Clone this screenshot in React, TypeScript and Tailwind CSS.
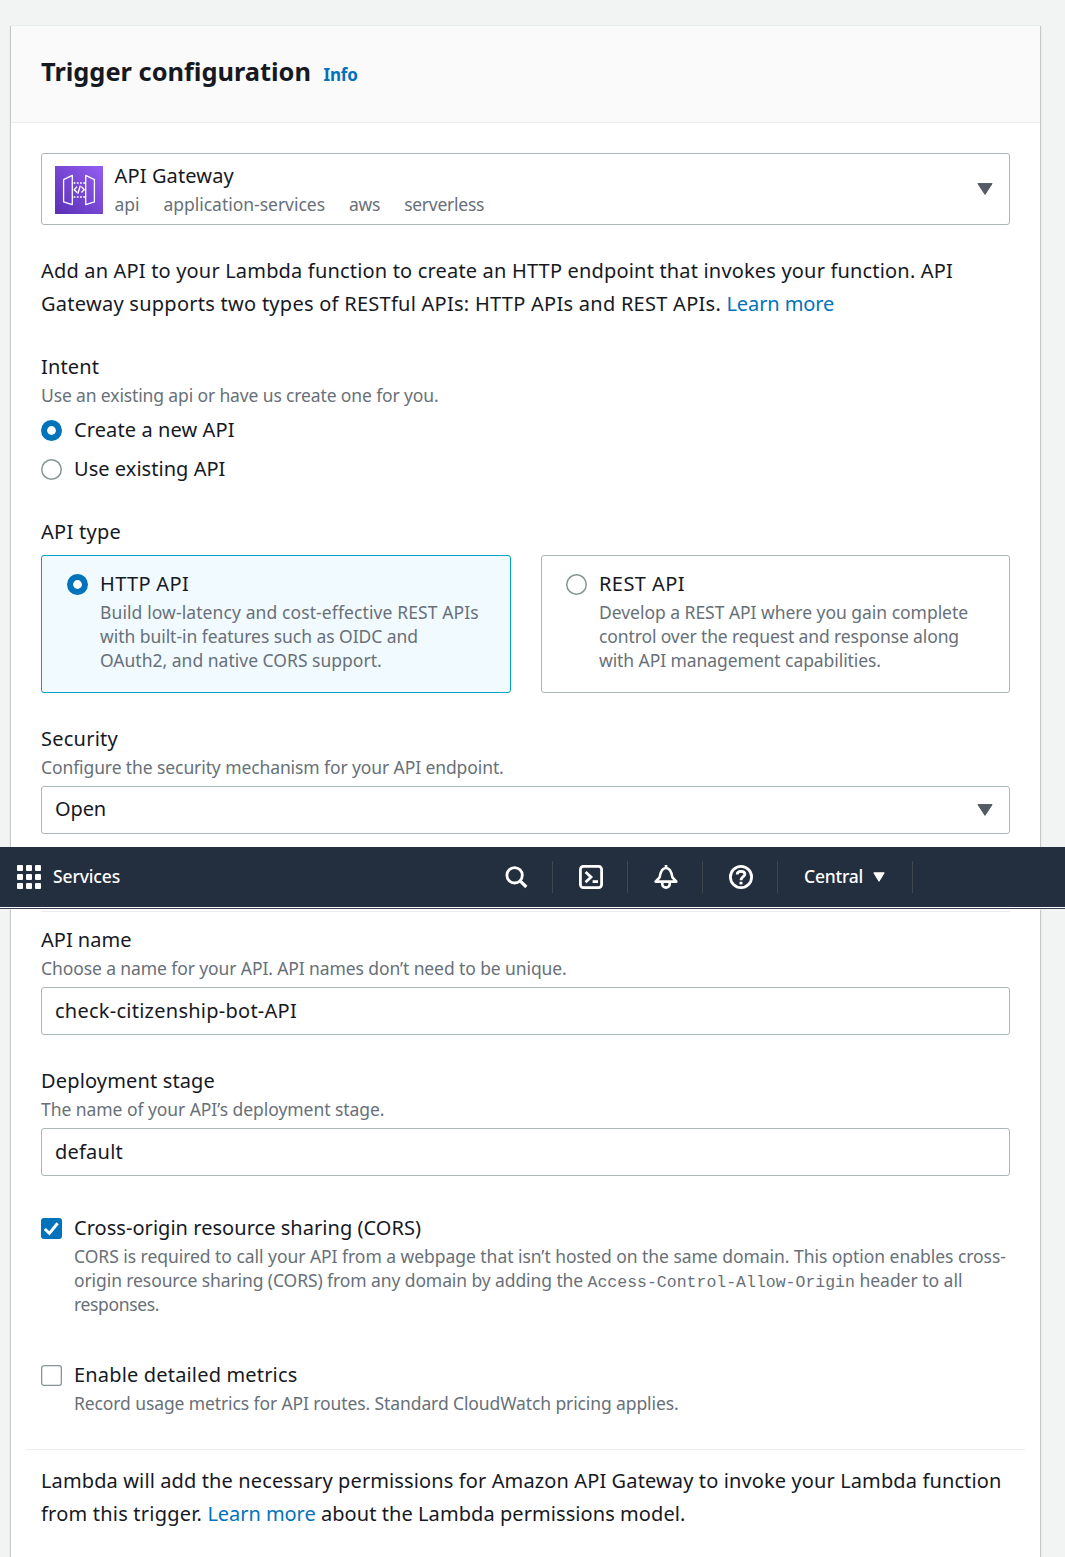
import React from "react";

const label = "text-[20px] leading-[33px] text-[#16191f] whitespace-nowrap";
const hint = "text-[17.5px] leading-[24px] text-[#687078] whitespace-nowrap";
const field =
  "flex items-center border border-[#aab7b8] rounded-[3px] bg-white px-[13px] h-[48px] mt-[7px]";

function Radio({ checked = false }: { checked?: boolean }) {
  return (
    <svg width="21" height="21" viewBox="0 0 21 21" className="shrink-0">
      {checked ? (
        <>
          <circle cx="10.5" cy="10.5" r="10.5" fill="#0073bb" />
          <circle cx="10.5" cy="10.5" r="4.4" fill="#fff" />
        </>
      ) : (
        <circle cx="10.5" cy="10.5" r="9.75" fill="#fff" stroke="#879596" strokeWidth="1.5" />
      )}
    </svg>
  );
}

function Checkbox({ checked = false }: { checked?: boolean }) {
  return (
    <svg width="21" height="21" viewBox="0 0 21 21" className="shrink-0" fill="none">
      {checked ? (
        <>
          <rect width="21" height="21" rx="3" fill="#0073bb" />
          <path d="M3.8 11 8.4 15.4 16.6 5.2" stroke="#fff" strokeWidth="3" />
        </>
      ) : (
        <rect x="0.65" y="0.65" width="19.7" height="19.7" rx="2.4" fill="#fff" stroke="#879596" strokeWidth="1.3" />
      )}
    </svg>
  );
}

function Caret() {
  return (
    <svg width="16" height="12" viewBox="0 0 16 12" className="ml-auto mr-[3px] shrink-0" fill="#545b64" stroke="#545b64" strokeWidth="1" strokeLinejoin="round">
      <path d="M0.9 0.6H15.1L8 11.4Z" />
    </svg>
  );
}

function GatewayIcon() {
  return (
    <svg width="48" height="48" viewBox="0 0 48 48" className="shrink-0 mt-[2px]" fill="none" stroke="#fff">
      <defs>
        <linearGradient id="gw" x1="0" y1="48" x2="48" y2="0" gradientUnits="userSpaceOnUse">
          <stop stopColor="#5a30b5" />
          <stop offset="1" stopColor="#945df2" />
        </linearGradient>
      </defs>
      <rect width="48" height="48" fill="url(#gw)" stroke="none" />
      <g strokeWidth="1.3" strokeLinejoin="round">
        <path d="M8.6 13.6 17.3 9.4V38.6L8.6 35.8Z" />
        <path d="M39.4 13.6 30.7 9.4V38.6L39.4 35.8Z" />
      </g>
      <path d="M18.6 17H30M18.6 31H30" strokeWidth="1.5" strokeDasharray="1.8 1.4" />
      <path d="M22 20.6 19.2 23.7 22 26.6M26.4 20.6 29.2 23.7 26.4 26.6M25.3 19.6 22.8 27.8" strokeWidth="1.4" />
    </svg>
  );
}

const divider = "w-px h-[32px] bg-[#414750] shrink-0";

function NavBar() {
  return (
    <nav className="h-[60px] bg-[#232f3e] flex items-center text-white text-[17.5px] font-medium pl-[17px] shrink-0">
      <div className="grid grid-cols-3 gap-[3px] w-[24px]">
        {Array.from({ length: 9 }, (_, i) => (
          <span key={i} className="size-[6px] rounded-[1px] bg-white" />
        ))}
      </div>
      <span className="ml-[12px] mb-[2px] tracking-[-0.14px] leading-[24px]">Services</span>
      <div className="ml-auto flex items-center w-[585px]">
        <div className="w-[72px] flex justify-center">
          <svg width="24" height="24" viewBox="0 0 24 24" fill="none" stroke="#fff" strokeWidth="2.8">
            <circle cx="10.6" cy="10.3" r="7.7" />
            <path d="M16.1 15.8 22.3 22" strokeWidth="3.2" />
          </svg>
        </div>
        <span className={divider} />
        <div className="w-[74px] flex justify-center pl-[2px]">
          <svg width="24" height="24" viewBox="0 0 24 24" fill="none" stroke="#fff" strokeWidth="2.8">
            <rect x="1.4" y="1.4" width="21.2" height="21.2" rx="3" />
            <path d="M6.6 7 12 12 6.6 17.2" />
            <path d="M13.6 16.6H19" />
          </svg>
        </div>
        <span className={divider} />
        <div className="w-[74px] flex justify-center pl-[2px]">
          <svg width="24" height="24" viewBox="0 0 24 24" fill="none" stroke="#fff" strokeWidth="2.6" strokeLinejoin="round">
            <path d="M12 0V3" />
            <path d="M1.6 16.6H22.4L18.4 12.4C17.6 7.5 16.4 3 12 3S6.4 7.5 5.6 12.4Z" />
            <path d="M8.3 17V19.2C8.3 21.2 9.9 22.6 12 22.6S15.7 21.2 15.7 19.2V17" />
          </svg>
        </div>
        <span className={divider} />
        <div className="w-[74px] flex justify-center pl-[2px]">
          <svg width="24" height="24" viewBox="0 0 24 24" fill="none" stroke="#fff" strokeWidth="2.8">
            <circle cx="12" cy="12" r="10.6" />
            <path d="M8.2 9.4C8.2 7.2 9.8 6.3 12 6.3S15.9 7.3 15.9 9.2C15.9 11.6 12 11.7 12 15.2" />
            <path d="M12 16.8V19.4" strokeWidth="3" />
          </svg>
        </div>
        <span className={divider} />
        <span className="ml-[26px] mb-[2px] leading-[24px] tracking-[-0.22px]">Central</span>
        <svg width="12" height="10" viewBox="0 0 12 10" className="ml-[10px]" fill="#fff" stroke="#fff" strokeLinejoin="round">
          <path d="M0.8 0.8H11.2L6 9.3Z" />
        </svg>
        <span className={divider + " ml-[27px]"} />
      </div>
    </nav>
  );
}

const panel =
  "ml-[11px] w-[1029px] bg-white shadow-[0_1px_1px_0_rgba(0,28,36,0.3),1px_1px_1px_0_rgba(0,28,36,0.15),-1px_1px_1px_0_rgba(0,28,36,0.15)]";

export default function App() {
  return (
    <div className="w-[1065px] h-[1557px] overflow-hidden flex flex-col bg-[#f2f3f3] font-['Noto_Sans',sans-serif]">
      <section className="h-[847px] shrink-0 overflow-hidden pt-[25px]">
        <div className={panel + " h-[860px]"}>
          <header className="h-[98px] bg-[#fafafa] border-t border-b border-[#eaeded] px-[30px] flex items-baseline pt-[27px]">
            <h2 className="text-[25.4px] leading-[36px] font-bold text-[#16191f]">Trigger configuration</h2>
            <a className="ml-[12.5px] text-[17px] font-bold text-[#0073bb] tracking-[-0.2px]">Info</a>
          </header>

          <div className="px-[30px] pt-[30px]">
            <div className="flex items-center h-[72px] border border-[#aab7b8] rounded-[3px] px-[13px]">
              <GatewayIcon />
              <div className="ml-[11.5px]">
                <div className={label + " tracking-[0.13px] -mt-[2px]"}>API Gateway</div>
                <div className={hint + " flex gap-[24px] mb-[2px]"}>
                  <span className="tracking-[-0.05px]">api</span>
                  <span className="tracking-[-0.02px]">application-services</span>
                  <span className="tracking-[-0.3px]">aws</span>
                  <span className="tracking-[-0.26px]">serverless</span>
                </div>
              </div>
              <Caret />
            </div>

            <p className={label + " mt-[29px]"}>
              <span className="tracking-[0.176px]">
                Add an API to your Lambda function to create an HTTP endpoint that invokes your function. API
              </span>
              <br />
              <span className="tracking-[0.263px]">
                Gateway supports two types of RESTful APIs: HTTP APIs and REST APIs.{" "}
              </span>
              <a className="text-[#0073bb] tracking-[-0.1px]">Learn more</a>
            </p>

            <div className={label + " mt-[30px] tracking-[0.13px]"}>Intent</div>
            <div className={hint + " tracking-[-0.13px]"}>Use an existing api or have us create one for you.</div>
            <div className="flex gap-[12px] mt-[6px]">
              <span className="flex h-[35px] -mb-[2px] items-center">
                <Radio checked />
              </span>
              <span className={label + " tracking-[0.1px]"}>Create a new API</span>
            </div>
            <div className="flex gap-[12px] mt-[6px]">
              <span className="flex h-[35px] -mb-[2px] items-center">
                <Radio />
              </span>
              <span className={label + " tracking-[0.04px]"}>Use existing API</span>
            </div>

            <div className={label + " mt-[30px] tracking-[0.27px]"}>API type</div>
            <div className="grid grid-cols-2 gap-[30px] mt-[7px]">
              <div className="h-[138px] flex gap-[12px] pl-[25px] pt-[11px] border border-[#00a1c9] rounded-[3px] bg-[#f1faff]">
                <span className="flex h-[35px] items-center">
                  <Radio checked />
                </span>
                <div>
                  <div className={label + " tracking-[0.32px]"}>HTTP API</div>
                  <div className={hint}>
                    <div className="tracking-[0.1px]">Build low-latency and cost-effective REST APIs</div>
                    <div className="tracking-[-0.05px]">with built-in features such as OIDC and</div>
                    <div className="tracking-[0.01px]">OAuth2, and native CORS support.</div>
                  </div>
                </div>
              </div>
              <div className="h-[138px] flex gap-[12px] pl-[24.5px] pt-[11px] border border-[#aab7b8] rounded-[3px]">
                <span className="flex h-[35px] items-center">
                  <Radio />
                </span>
                <div>
                  <div className={label + " tracking-[0.43px]"}>REST API</div>
                  <div className={hint}>
                    <div className="tracking-[-0.03px]">Develop a REST API where you gain complete</div>
                    <div className="tracking-[-0.115px]">control over the request and response along</div>
                    <div className="tracking-[-0.075px]">with API management capabilities.</div>
                  </div>
                </div>
              </div>
            </div>

            <div className={label + " mt-[29px] tracking-[0.24px]"}>Security</div>
            <div className={hint + " tracking-[-0.1px]"}>Configure the security mechanism for your API endpoint.</div>
            <div className={field}>
              <span className={label + " tracking-[-0.14px] -mt-[3px]"}>Open</span>
              <Caret />
            </div>
          </div>
        </div>
      </section>

      <NavBar />
      <div className="h-px bg-white shrink-0" />
      <div className="h-px bg-[#3a3f58] shrink-0" />

      <section className="flex-1 overflow-hidden">
        <div className={panel + " h-[660px] px-[30px] pt-[2px]"}>
          <div className="h-px bg-[#eaeded]" />
          <div className={label + " mt-[11px]"}>API name</div>
          <div className={hint + " tracking-[-0.1px]"}>
            Choose a name for your API. API names don’t need to be unique.
          </div>
          <div className={field}>
            <span className={label + " tracking-[0.25px] -mt-px"}>check-citizenship-bot-API</span>
          </div>

          <div className={label + " mt-[29px] tracking-[0.15px]"}>Deployment stage</div>
          <div className={hint + " tracking-[-0.055px]"}>The name of your API’s deployment stage.</div>
          <div className={field}>
            <span className={label + " tracking-[0.22px] -mt-px"}>default</span>
          </div>

          <div className="mt-[35px] flex gap-[12px]">
            <span className="flex h-[35px] items-center">
              <Checkbox checked />
            </span>
            <div>
              <div className={label + " tracking-[0.04px]"}>Cross-origin resource sharing (CORS)</div>
              <div className={hint}>
                <div className="tracking-[-0.04px]">
                  CORS is required to call your API from a webpage that isn’t hosted on the same domain. This option enables cross-
                </div>
                <div className="h-[24px]">
                  <span className="tracking-[-0.095px]">origin resource sharing (CORS) from any domain by adding the </span>
                  <code className="font-['Liberation_Mono',monospace] text-[16.5px]">
                    Access-Control-Allow-Origin
                  </code>
                  <span className="tracking-[-0.02px]"> header to all</span>
                </div>
                <div className="tracking-[-0.35px]">responses.</div>
              </div>
            </div>
          </div>

          <div className="mt-[42px] flex gap-[12px]">
            <span className="flex h-[35px] items-center">
              <Checkbox />
            </span>
            <div>
              <div className={label + " tracking-[0.17px]"}>Enable detailed metrics</div>
              <div className={hint + " tracking-[-0.105px]"}>
                Record usage metrics for API routes. Standard CloudWatch pricing applies.
              </div>
            </div>
          </div>

          <div className="h-px bg-[#eaeded] mt-[34px] -mx-[15px]" />
          <p className={label + " mt-[14px]"}>
            <span className="tracking-[0.12px]">
              Lambda will add the necessary permissions for Amazon API Gateway to invoke your Lambda function
            </span>
            <br />
            <span className="tracking-[0.21px]">from this trigger. </span>
            <a className="text-[#0073bb] tracking-[-0.05px]">Learn more</a>
            <span className="tracking-[0.07px]"> about the Lambda permissions model.</span>
          </p>
        </div>
      </section>
    </div>
  );
}
